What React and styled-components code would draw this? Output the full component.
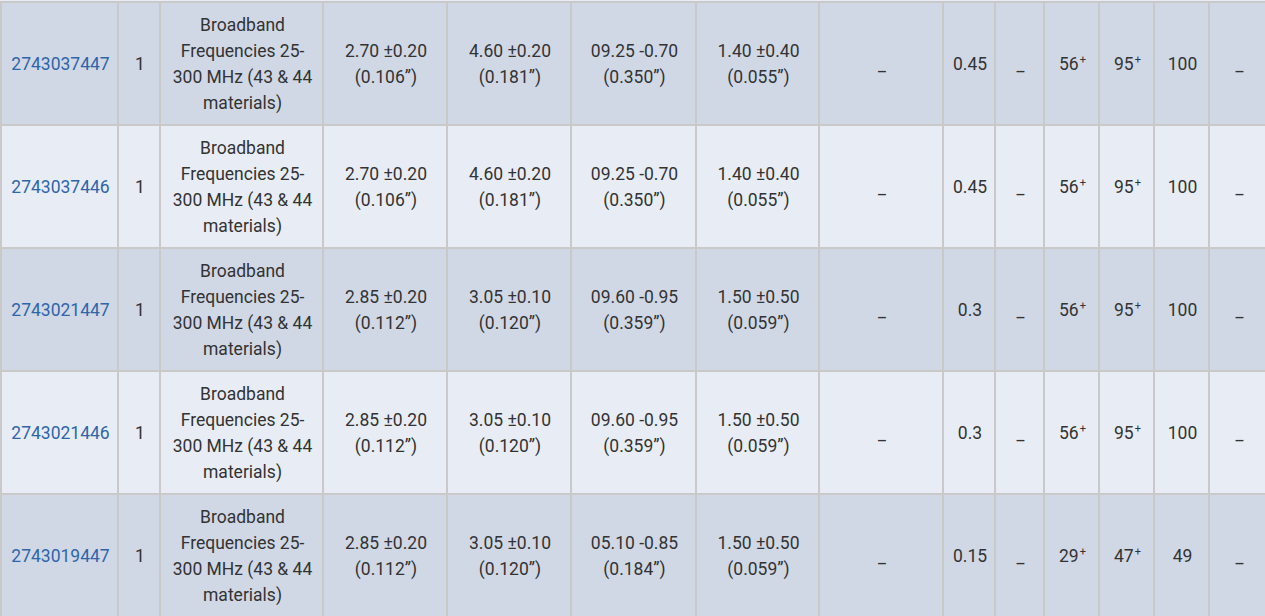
import React from 'react'
import styled, { createGlobalStyle } from 'styled-components'

const GlobalStyle = createGlobalStyle`
    html, body {
        margin: 0;
        padding: 0;
        background: #fff;
        overflow: hidden;
    }
`

// the page is scrolled: only the last pixel of the previous (light) row shows
const Viewport = styled.div`
    width: 1265px;
    height: 615px;
    overflow: hidden;
    border-top: 1px solid #e8edf5;
`

const Table = styled.table`
    width: 1268px;
    border-collapse: collapse;
    table-layout: fixed;
    font-family: Roboto, "Noto Sans", sans-serif;
    font-size: 17.5px;
    line-height: 26px;
    color: #333;
`

const Row = styled.tr`
    background: ${p => (p.$dark ? '#d0d8e6' : '#e8edf5')};
`

const Cell = styled.td`
    border: 2px solid #c9c9c9;
    padding: 9px 3px 8px 5px;
    text-align: center;
    vertical-align: middle;
`

const PartLink = styled.a`
    color: #2f65a9;
    text-decoration: none;
`

const Dash = styled.span`
    display: inline-block;
    position: relative;
    top: 1px;
`

const Sup = styled.sup`
    font-size: 11px;
    line-height: 0;
    vertical-align: 7px;
    margin-left: 1px;
`

const widths = [117, 42, 163, 124, 124, 125, 123, 124, 52, 49, 55, 55, 55, 59]

const rows = [
    { part: '2743037447', a: ['2.70 ±0.20', '(0.106”)'], b: ['4.60 ±0.20', '(0.181”)'], c: ['09.25 -0.70', '(0.350”)'], d: ['1.40 ±0.40', '(0.055”)'], w: '0.45', z1: '56', z2: '95', z3: '100' },
    { part: '2743037446', a: ['2.70 ±0.20', '(0.106”)'], b: ['4.60 ±0.20', '(0.181”)'], c: ['09.25 -0.70', '(0.350”)'], d: ['1.40 ±0.40', '(0.055”)'], w: '0.45', z1: '56', z2: '95', z3: '100' },
    { part: '2743021447', a: ['2.85 ±0.20', '(0.112”)'], b: ['3.05 ±0.10', '(0.120”)'], c: ['09.60 -0.95', '(0.359”)'], d: ['1.50 ±0.50', '(0.059”)'], w: '0.3', z1: '56', z2: '95', z3: '100' },
    { part: '2743021446', a: ['2.85 ±0.20', '(0.112”)'], b: ['3.05 ±0.10', '(0.120”)'], c: ['09.60 -0.95', '(0.359”)'], d: ['1.50 ±0.50', '(0.059”)'], w: '0.3', z1: '56', z2: '95', z3: '100' },
    { part: '2743019447', a: ['2.85 ±0.20', '(0.112”)'], b: ['3.05 ±0.10', '(0.120”)'], c: ['05.10 -0.85', '(0.184”)'], d: ['1.50 ±0.50', '(0.059”)'], w: '0.15', z1: '29', z2: '47', z3: '49' },
]

const TwoLine = ({ lines }) => (
    <>
        {lines[0]}
        <br />
        {lines[1]}
    </>
)

const App = () => {
    return (
        <Viewport>
            <GlobalStyle />
            <Table>
                <colgroup>
                    {widths.map((w, i) => (
                        <col key={i} style={{ width: w }} />
                    ))}
                </colgroup>
                <tbody>
                    {rows.map((r, i) => (
                        <Row key={r.part} $dark={i % 2 === 0}>
                            <Cell><PartLink href="#">{r.part}</PartLink></Cell>
                            <Cell>1</Cell>
                            <Cell>Broadband Frequencies 25-300 MHz (43 &amp; 44 materials)</Cell>
                            <Cell><TwoLine lines={r.a} /></Cell>
                            <Cell><TwoLine lines={r.b} /></Cell>
                            <Cell><TwoLine lines={r.c} /></Cell>
                            <Cell><TwoLine lines={r.d} /></Cell>
                            <Cell><Dash>_</Dash></Cell>
                            <Cell>{r.w}</Cell>
                            <Cell><Dash>_</Dash></Cell>
                            <Cell>{r.z1}<Sup>+</Sup></Cell>
                            <Cell>{r.z2}<Sup>+</Sup></Cell>
                            <Cell>{r.z3}</Cell>
                            <Cell><Dash>_</Dash></Cell>
                        </Row>
                    ))}
                </tbody>
            </Table>
        </Viewport>
    )
}

export default App
